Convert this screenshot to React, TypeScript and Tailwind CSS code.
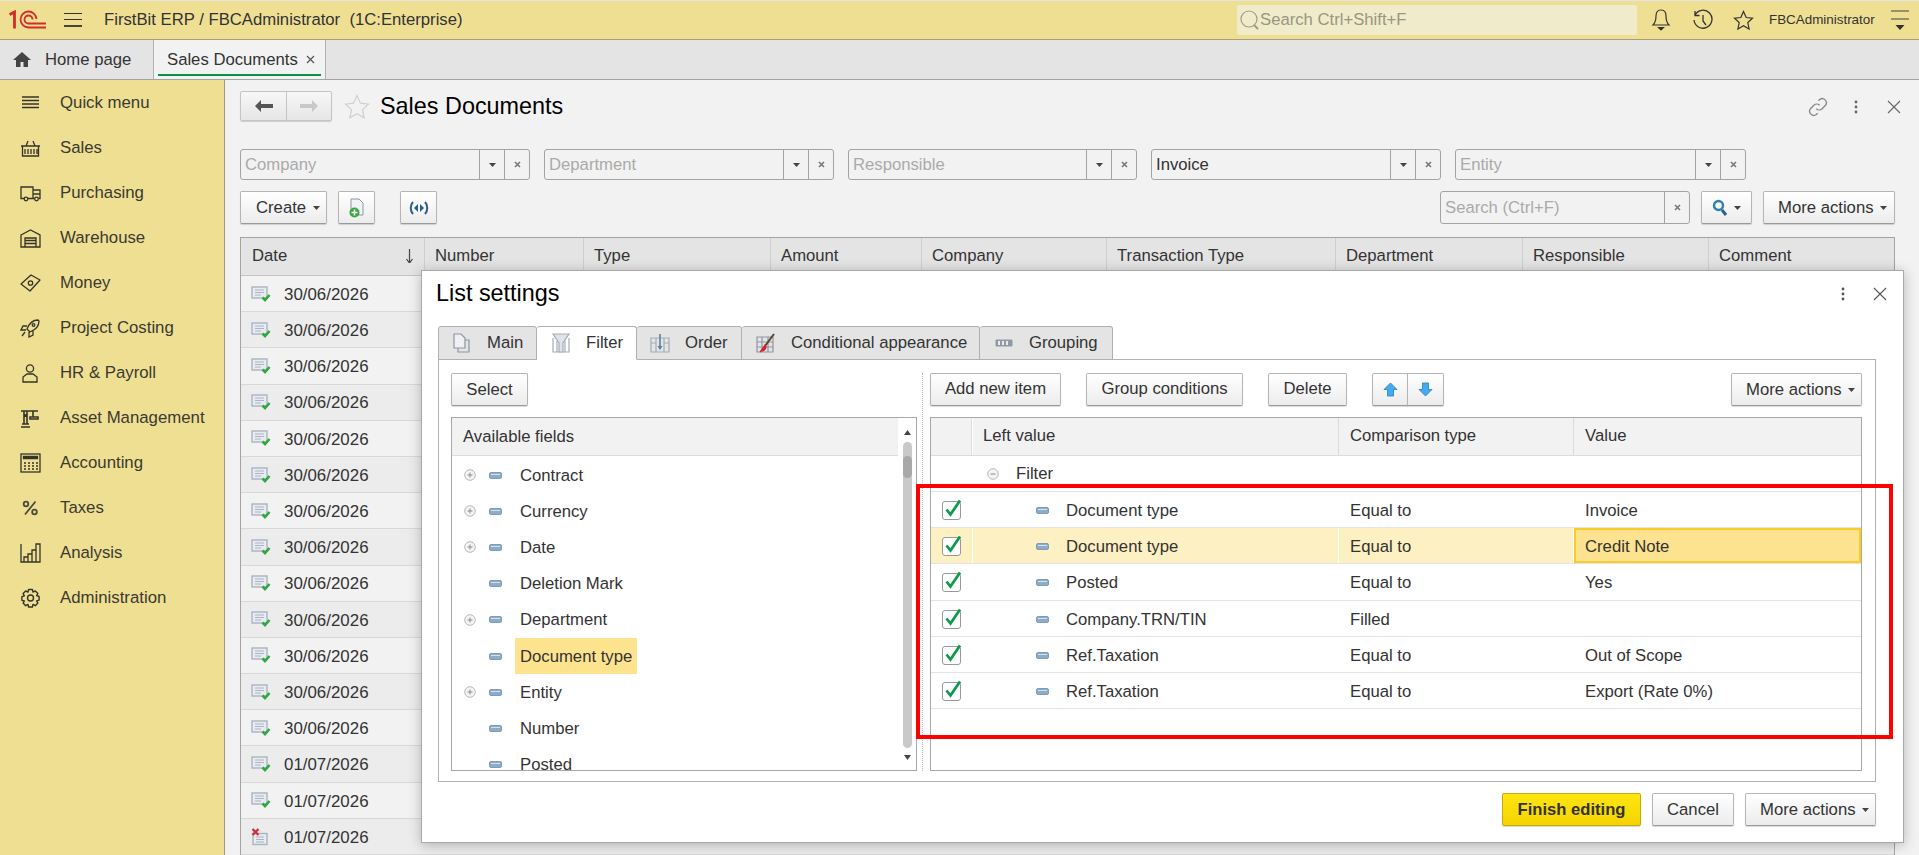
import React from "react";

const FONT = "font-['Liberation_Sans',Arial,sans-serif]";

function Logo() {
  return (
    <svg width="38" height="20" viewBox="0 0 38 20" fill="none" stroke="#d62b2b">
      <path d="M0.500 4.500 L5.500 2 V18.500" strokeWidth="2.800" />
      <path d="M27.500 9 A8 8 0 1 0 19.500 17.500 H37" strokeWidth="1.800" />
      <path d="M23.500 9.500 A4 4 0 1 0 19.500 13.500 H37" strokeWidth="1.800" />
    </svg>
  );
}

function NavIcon({ name }: { name: string }) {
  const c = "#34342a";
  const p = { fill: "none", stroke: c, strokeWidth: 1.3 };
  let body: React.ReactNode = null;
  if (name === "menu") body = <path {...p} d="M2 4h17M2 7.500h17M2 11h17M2 14.500h17" />;
  if (name === "basket")
    body = (
      <g {...p}>
        <path d="M1 8h19M2.500 8v10h16V8M5 11v5M8 11v5M11 11v5M14 11v5M17 11v5M6 8l2-5M15 8l-2-5" />
      </g>
    );
  if (name === "truck")
    body = (
      <g {...p}>
        <path d="M4.500 15.500H1V4h12v11.500H8M13 7h7v8.500h-1.500M13 15.500h1.500M13 11h7" />
        <circle cx="6" cy="16" r="1.800" />
        <circle cx="16.500" cy="16" r="1.800" />
      </g>
    );
  if (name === "warehouse")
    body = (
      <g {...p}>
        <path d="M1 7l9.500-5L20 7v12H1zM5 19v-9h11v9M5 12.500h11M5 15.500h11" />
      </g>
    );
  if (name === "money")
    body = (
      <g {...p}>
        <path d="M1 11l10-9 9 5-10 11z" strokeLinejoin="round" />
        <circle cx="10.500" cy="10" r="2.200" />
      </g>
    );
  if (name === "rocket")
    body = (
      <g {...p}>
        <path d="M18 2c-5 0-9 4-11 9l3 3c5-2 9-6 9-11zM7 8H3l-2 4h5M13 13v4l-4 2v-5M5 14l-3 4" />
        <circle cx="13.500" cy="7" r="1.300" />
      </g>
    );
  if (name === "person")
    body = (
      <g {...p}>
        <circle cx="10" cy="5.500" r="3.600" />
        <path d="M3 19v-5l4-3h6l4 3v5z" />
      </g>
    );
  if (name === "crane")
    body = (
      <g {...p} strokeWidth="1.600">
        <path d="M1 19h9M2 16h7M4 16V3M7 16V3M1 3h17M4 6l3 3M7 6L4 9M13 3v6M10 11h8v-2h-8z" />
      </g>
    );
  if (name === "calc")
    body = (
      <g {...p}>
        <rect x="1" y="1" width="19" height="18" />
        <path d="M3.500 3.500h14v2h-14z" fill={c} />
        <path d="M4 10h2M8 10h2M12 10h2M16 10h2M4 13h2M8 13h2M12 13h2M16 13h2M4 16h2M8 16h2M12 16h2M16 16h2" />
      </g>
    );
  if (name === "percent")
    body = (
      <g stroke="#4a4a3c" fill="none" strokeWidth="1.800">
        <path d="M15.500 3.500L5 16.500" />
        <circle cx="6" cy="6" r="2.300" />
        <circle cx="14.500" cy="14" r="2.300" />
      </g>
    );
  if (name === "chart")
    body = (
      <g {...p}>
        <path d="M1 1v18h19V1h-4v18M16 5h-0M12 19V7h4M8 19v-8h4M4 19v-5h4" />
      </g>
    );
  if (name === "gear")
    body = (
      <g {...p} strokeWidth="1.400">
        <circle cx="10.500" cy="10" r="3" />
        <path
          d="M8.600 1.500h3.800l.6 2.600 2.300-1.200 2.600 2.600-1.300 2.200 2.500.8v3.600l-2.500.7 1.300 2.300-2.600 2.600-2.300-1.300-.6 2.600H8.600l-.6-2.600-2.300 1.300-2.600-2.600L4.400 13l-2.500-.7V8.600l2.500-.8-1.300-2.200 2.600-2.600L8 4.100z"
          strokeLinejoin="round"
        />
      </g>
    );
  return (
    <svg width="21" height="20" viewBox="0 0 21 20">
      {body}
    </svg>
  );
}

const navItems = [
  ["menu", "Quick menu"],
  ["basket", "Sales"],
  ["truck", "Purchasing"],
  ["warehouse", "Warehouse"],
  ["money", "Money"],
  ["rocket", "Project Costing"],
  ["person", "HR & Payroll"],
  ["crane", "Asset Management"],
  ["calc", "Accounting"],
  ["percent", "Taxes"],
  ["chart", "Analysis"],
  ["gear", "Administration"],
];

function Caret({ color = "#444" }: { color?: string }) {
  return (
    <svg width="7" height="4" viewBox="0 0 7 4" className="shrink-0">
      <path d="M0 0h7L3.500 4z" fill={color} />
    </svg>
  );
}

function SmallX({ color = "#777" }: { color?: string }) {
  return (
    <svg width="7" height="7" viewBox="0 0 7 7">
      <path d="M1 1l5 5M6 1L1 6" stroke={color} strokeWidth="1.600" fill="none" />
    </svg>
  );
}

function FilterField({ label, filled, w = "w-[290px]" }: { label: string; filled?: boolean; w?: string }) {
  return (
    <div className={`flex h-[31px] ${w} rounded-[3px] border border-[#a3a3a3] bg-[#f2f2f2]`}>
      <div className={`flex-1 pl-[4px] text-[16.7px] leading-[30px] ${filled ? "text-[#333]" : "text-[#aaa]"}`}>{label}</div>
      <div className="flex w-[25px] items-center justify-center border-l border-[#a3a3a3]">
        <Caret />
      </div>
      <div className="flex w-[25px] items-center justify-center border-l border-[#a3a3a3]">
        <SmallX />
      </div>
    </div>
  );
}

function Btn({ children, className = "" }: { children: React.ReactNode; className?: string }) {
  return (
    <div
      className={`flex items-center justify-center whitespace-nowrap rounded-[2px] border border-[#b5b5b5] border-b-[#999] bg-gradient-to-b from-[#ffffff] to-[#ececec] text-[16.7px] text-[#333] shadow-[0_1px_1px_rgba(0,0,0,0.15)] ${className}`}
    >
      {children}
    </div>
  );
}

function MoreActions({ className = "" }: { className?: string }) {
  return (
    <div
      className={`flex h-[33px] items-center justify-start gap-[6px] whitespace-nowrap rounded-[2px] border border-[#b5b5b5] border-b-[#999] bg-gradient-to-b from-[#ffffff] to-[#ececec] pl-[14px] text-[16.7px] text-[#333] shadow-[0_1px_1px_rgba(0,0,0,0.15)] ${className}`}
    >
      More actions
      <Caret />
    </div>
  );
}

function DocIcon({ bad }: { bad?: boolean }) {
  return (
    <svg width="20" height="18" viewBox="0 0 20 18">
      {bad ? (
        <g>
          <rect x="2" y="5.500" width="14" height="11" fill="#e8ebf0" stroke="#aab4c2" strokeWidth="1.400" />
          <path d="M5 9h8M5 11.500h8M5 14h8" stroke="#aab4c2" />
          <path d="M1.500 1l6 6M7.500 1l-6 6" stroke="#d2323c" strokeWidth="2.400" />
        </g>
      ) : (
        <g>
          <rect x="1" y="1" width="15" height="11" fill="#e8ebf0" stroke="#aab4c2" strokeWidth="1.400" />
          <path d="M4 4h9M4 6.500h9M4 9h6" stroke="#aab4c2" />
          <path d="M11.500 11.500l2.500 2.500 4.500-5" fill="none" stroke="#2fa83f" strokeWidth="2.600" />
        </g>
      )}
    </svg>
  );
}

function Checkbox() {
  return (
    <div className="relative h-[19px] w-[19px] rounded-[3px] border border-[#999] bg-white">
      <svg className="absolute left-[-1px] top-[-3px]" width="21" height="20" viewBox="0 0 21 20">
        <path d="M4.500 10.500L8.500 15.500L18 1.500" fill="none" stroke="#0e9a4c" strokeWidth="2.800" />
      </svg>
    </div>
  );
}

function FieldDash() {
  return (
    <svg width="13" height="7" viewBox="0 0 13 7">
      <rect x="0.500" y="0.500" width="12" height="6" rx="1.500" fill="#8dacc8" stroke="#7f9cb8" />
      <path d="M2 2.500h9" stroke="#d3e1ee" />
    </svg>
  );
}

function Expander({ minus }: { minus?: boolean }) {
  return (
    <svg width="12" height="12" viewBox="0 0 12 12">
      <circle cx="6" cy="6" r="5.300" fill="#f4f4f4" stroke="#b7b7b7" />
      <path d={minus ? "M3.500 6h5" : "M3.500 6h5M6 3.500v5"} stroke="#8a8a8a" />
    </svg>
  );
}

const columns: [string, string][] = [
  ["Number", "w-[159px]"],
  ["Type", "w-[187px]"],
  ["Amount", "w-[151px]"],
  ["Company", "w-[185px]"],
  ["Transaction Type", "w-[229px]"],
  ["Department", "w-[187px]"],
  ["Responsible", "w-[186px]"],
  ["Comment", "flex-1"],
];

const dates = [...Array(13).fill("30/06/2026"), "01/07/2026", "01/07/2026", "01/07/2026"];

const fields: [string, boolean, boolean?][] = [
  ["Contract", true],
  ["Currency", true],
  ["Date", true],
  ["Deletion Mark", false],
  ["Department", true],
  ["Document type", false, true],
  ["Entity", true],
  ["Number", false],
  ["Posted", false],
];

const conditions = [
  ["Document type", "Equal to", "Invoice"],
  ["Document type", "Equal to", "Credit Note"],
  ["Posted", "Equal to", "Yes"],
  ["Company.TRN/TIN", "Filled", ""],
  ["Ref.Taxation", "Equal to", "Out of Scope"],
  ["Ref.Taxation", "Equal to", "Export (Rate 0%)"],
];

function TabIcon({ name }: { name: string }) {
  if (name === "Main")
    return (
      <svg width="18" height="20" viewBox="0 0 18 20" fill="none" stroke="#8d96a3" strokeWidth="1.200">
        <path d="M1 1h7l4 4v10H1z" fill="#eef0f3" />
        <path d="M12 7h4v12H5v-4" />
      </svg>
    );
  if (name === "Filter")
    return (
      <svg width="20" height="20" viewBox="0 0 20 20" fill="none" stroke="#a5adb8" strokeWidth="1.200">
        <path d="M2 5v14h16V5M6 8v11M14 8v11" />
        <path d="M2 1h16l-6 9v9H8v-9z" fill="#dfe2e7" />
      </svg>
    );
  if (name === "Order")
    return (
      <svg width="20" height="20" viewBox="0 0 20 20" fill="none" stroke="#a5adb8" strokeWidth="1.200">
        <path d="M1 5h18v14H1zM6 5v14M14 5v14M1 10h5M14 10h5" />
        <path d="M10 1v15" stroke="#5b7fa6" strokeWidth="1.600" />
        <path d="M7.500 13l2.500 4 2.500-4z" fill="#5b7fa6" stroke="none" />
      </svg>
    );
  if (name === "Conditional appearance")
    return (
      <svg width="20" height="20" viewBox="0 0 20 20" fill="none" stroke="#8d96a3" strokeWidth="1.200">
        <path d="M1 4h16v15H1zM1 9h16M1 14h16M6 4v15M12 4v15" />
        <path d="M18 1L9 13" stroke="#5a4632" strokeWidth="2" />
        <path d="M9 12l-5 7 1-1c3 0 5-2 5-4z" fill="#d6232c" stroke="#d6232c" />
      </svg>
    );
  return (
    <svg width="18" height="8" viewBox="0 0 18 8">
      <rect x="0.500" y="0.500" width="17" height="7" rx="1" fill="#8f98a5" />
      <path d="M3 2h2v4H3zM7 2h2v4H7zM11 2h2v4h-2z" fill="#e9ebee" />
    </svg>
  );
}

const tabs: [string, string, string][] = [
  ["Main", "w-[99px] pl-[14px]", "gap-[16px]"],
  ["Filter", "w-[100px] pl-[14px]", "gap-[15px]"],
  ["Order", "w-[105px] pl-[13px]", "gap-[15px]"],
  ["Conditional appearance", "w-[238px] pl-[14px]", "gap-[15px]"],
  ["Grouping", "w-[133px] pl-[15px]", "gap-[16px]"],
];

function Caret2({ up }: { up?: boolean }) {
  return (
    <svg width="7" height="5" viewBox="0 0 7 5" className="shrink-0">
      <path d={up ? "M3.500 0L7 5H0z" : "M0 0h7L3.500 5z"} fill="#444" />
    </svg>
  );
}

function Arrow({ up }: { up?: boolean }) {
  return (
    <svg width="15" height="15" viewBox="0 0 15 15">
      <path
        d={up ? "M7.500 1L14 7.500H10.500V14H4.500V7.500H1z" : "M7.500 14L14 7.500H10.500V1H4.500V7.500H1z"}
        fill="#46aaf0"
        stroke="#3a85bd"
        strokeWidth="0.900"
      />
    </svg>
  );
}

function ListSettings() {
  return (
    <div className="absolute left-[421px] top-[270px] flex h-[573px] w-[1483px] flex-col border border-[#a8a8a8] bg-white pl-[16px] pr-[27px] shadow-[0_2px_12px_rgba(0,0,0,0.25)]">
      <div className="flex h-[55px] items-center justify-between">
        <div className="ml-[-2px] pb-[9px] text-[23.4px] text-black">List settings</div>
        <div className="mr-[-11px] flex items-center gap-[28px] pb-[9px]">
          <svg width="4" height="14" viewBox="0 0 4 14">
            <g fill="#555">
              <circle cx="2" cy="2" r="1.400" />
              <circle cx="2" cy="7" r="1.400" />
              <circle cx="2" cy="12" r="1.400" />
            </g>
          </svg>
          <svg width="14" height="14" viewBox="0 0 14 14">
            <path d="M1 1l12 12M13 1L1 13" stroke="#555" strokeWidth="1.100" fill="none" />
          </svg>
        </div>
      </div>
      <div className="flex h-[34px]">
        {tabs.map(([t, w, g]) => (
          <div
            key={t}
            className={`flex items-center ${g} ${w} whitespace-nowrap rounded-t-[3px] border border-l-0 first:border-l border-[#b0b0b0] text-[16.7px] text-[#333] ${
              t === "Filter" ? "z-10 border-b-white bg-white" : "bg-[#e4e4e4]"
            }`}
          >
            <TabIcon name={t} />
            {t}
          </div>
        ))}
      </div>
      <div className="mt-[-1px] flex h-[423px] flex-col border border-[#b0b0b0] pl-[12px] pr-[13px] pt-[13px]">
        <div className="flex h-[398px]">
          <div className="flex w-[466px] flex-col">
            <Btn className="h-[33px] w-[77px]">Select</Btn>
            <div className="mt-[11px] flex min-h-0 flex-1 border border-[#a8a8a8]">
              <div className="flex min-w-0 flex-1 flex-col overflow-hidden">
                <div className="h-[38px] shrink-0 border-b border-[#dcdcdc] bg-[#f2f2f2] pl-[11px] text-[16.7px] leading-[37px] text-[#333]">
                  Available fields
                </div>
                {fields.map(([f, exp, sel]) => (
                  <div key={f} className="flex h-[36.2px] shrink-0 items-center pl-[12px] pt-[2px] text-[16.7px] text-[#333]">
                    <div className="flex w-[25px] items-center">{exp && <Expander />}</div>
                    <div className="flex w-[26px] items-center">
                      <FieldDash />
                    </div>
                    <div className={`flex h-[36px] items-center px-[5px] ${sel ? "bg-[#fee38f]" : ""}`}>{f}</div>
                  </div>
                ))}
              </div>
              <div className="flex w-[18px] flex-col items-center pb-[10px] pt-[12px]">
                <Caret2 up />
                <div className="my-[7px] w-[9px] flex-1 rounded-[5px] bg-[#c9c9c9] pt-[14px]">
                  <div className="h-[22px] rounded-[5px] bg-[#a9a9a9]" />
                </div>
                <Caret2 />
              </div>
            </div>
          </div>
          <div className="ml-[5px] mr-[7px] h-full border-l border-dotted border-[#bbb]" />
          <div className="flex min-w-0 flex-1 flex-col">
            <div className="flex items-center">
              <Btn className="h-[33px] w-[131px] pb-[1px]">Add new item</Btn>
              <Btn className="ml-[25px] h-[33px] w-[157px] pb-[1px]">Group conditions</Btn>
              <Btn className="ml-[25px] h-[33px] w-[79px] pb-[1px]">Delete</Btn>
              <div className="ml-[25px] flex">
                <Btn className="h-[33px] w-[36px] rounded-r-none">
                  <Arrow up />
                </Btn>
                <Btn className="ml-[-1px] h-[33px] w-[37px] rounded-l-none">
                  <Arrow />
                </Btn>
              </div>
              <MoreActions className="ml-auto w-[131px]" />
            </div>
            <div className="mt-[11px] flex min-h-0 flex-1 flex-col border border-[#a8a8a8]">
              <div className="flex h-[38px] shrink-0 border-b border-[#dcdcdc] text-[16.7px] leading-[36px] text-[#333]">
                <div className="w-[41px] border-r border-[#dcdcdc] bg-[#f2f2f2]" />
                <div className="ml-[1px] w-[366px] border-r border-[#dcdcdc] bg-[#f2f2f2] pl-[10px]">Left value</div>
                <div className="w-[235px] border-r border-[#dcdcdc] bg-[#f2f2f2] pl-[11px]">Comparison type</div>
                <div className="flex-1 bg-[#f2f2f2] pl-[11px]">Value</div>
              </div>
              <div className="flex h-[36px] items-center border-b border-[#e4e4e4] text-[16.7px] text-[#333]">
                <div className="ml-[56px] flex w-[29px] items-center">
                  <Expander minus />
                </div>
                Filter
              </div>
              {conditions.map(([l, c, v], i) => (
                <div
                  key={i}
                  className={`flex h-[36.2px] shrink-0 items-center border-b border-[#e4e4e4] text-[16.7px] text-[#333] ${
                    i === 1 ? "bg-[#fdf0c2]" : ""
                  }`}
                >
                  <div className="flex h-full w-[42px] items-center justify-center border-r border-white pt-[2px]">
                    <Checkbox />
                  </div>
                  <div className="flex h-full w-[366px] items-center border-r border-white pl-[63px] pt-[2px]">
                    <FieldDash />
                    <span className="ml-[17px]">{l}</span>
                  </div>
                  <div className="flex h-full w-[235px] items-center border-r border-white pl-[11px] pt-[2px]">{c}</div>
                  <div
                    className={`flex h-full flex-1 items-center pt-[2px] ${
                      i === 1 ? "border-2 border-[#fdcb25] bg-[#fde28f] pl-[9px]" : "pl-[11px]"
                    }`}
                  >
                    {v}
                  </div>
                </div>
              ))}
            </div>
          </div>
        </div>
      </div>
      <div className="flex flex-1 items-start justify-end gap-[11px] pt-[11px]">
        <div className="flex h-[33px] w-[139px] items-center justify-center rounded-[2px] border border-[#c7a900] bg-gradient-to-b from-[#ffe610] to-[#f5d400] pt-[1px] text-[16.6px] font-bold text-[#333] shadow-[0_1px_1px_rgba(0,0,0,0.15)]">
          Finish editing
        </div>
        <Btn className="h-[33px] w-[82px] pt-[1px]">Cancel</Btn>
        <MoreActions className="w-[131px] pt-[1px]" />
      </div>
      <div className="pointer-events-none absolute left-[494px] top-[213px] h-[255px] w-[977px] border-[4px] border-[#ff0000]" />
    </div>
  );
}

export default function App() {
  return (
    <div className={`relative flex h-[855px] w-[1919px] flex-col overflow-hidden bg-[#f2f2f2] ${FONT}`}>
      <header className="flex h-[40px] shrink-0 items-center border-b border-t border-b-[#a89f7a] border-t-[#e4e4e4] bg-[#efdf93] text-[#333]">
        <div className="ml-[9px]">
          <Logo />
        </div>
        <svg className="ml-[17px]" width="18" height="14" viewBox="0 0 18 14">
          <path d="M0 0.500h18M0 6.500h18" stroke="#333" strokeWidth="1" />
          <path d="M0 13h18" stroke="#333" strokeWidth="1.800" />
        </svg>
        <div className="ml-[22px] whitespace-pre text-[16.7px]">FirstBit ERP / FBCAdministrator  (1C:Enterprise)</div>
        <div className="ml-auto flex h-[30px] w-[400px] items-center rounded-[2px] bg-[#f0ebca] pl-[3px] text-[16.7px] text-[#999682]">
          <svg width="20" height="22" viewBox="0 0 20 22" fill="none" stroke="#a09c88" strokeWidth="1.200">
            <circle cx="9" cy="10" r="8" />
            <path d="M14 16l4 4" strokeWidth="2" />
          </svg>
          Search Ctrl+Shift+F
        </div>
        <div className="ml-[14px] flex w-[103px] items-center justify-between">
          <svg width="20" height="24" viewBox="0 0 20 24" fill="none" stroke="#333" strokeWidth="1.200">
            <path d="M10 2c-4 0-5 3-5 6 0 4-1 7-3 9h16c-2-2-3-5-3-9 0-3-1-6-5-6z" />
            <path d="M7.500 19.500h5l-2.500 2.500z" fill="#333" />
          </svg>
          <svg width="21" height="22" viewBox="0 0 21 22" fill="none" stroke="#333" strokeWidth="1.300">
            <path d="M3 6a9 9 0 1 1-1 5M3 2v4.500h4.500M11 6v6l3 4" />
          </svg>
          <svg width="21" height="21" viewBox="0 0 21 21" fill="none" stroke="#333" strokeWidth="1.200">
            <path d="M10.500 1.500l2.700 6 6.300.7-4.700 4.300 1.300 6.500-5.600-3.300-5.600 3.300 1.300-6.500L1.500 8.200l6.300-.7z" />
          </svg>
        </div>
        <div className="ml-[15px] w-[105px] whitespace-nowrap text-[13.4px]">FBCAdministrator</div>
        <svg className="ml-[17px] mr-[10px]" width="18" height="22" viewBox="0 0 18 22">
          <path d="M0 2h18M0 10h18" stroke="#444" strokeWidth="1.200" />
          <path d="M4.500 16h9l-4.500 5z" fill="#333" />
        </svg>
      </header>

      <nav className="flex h-[40px] shrink-0 border-b border-[#a3a3a3] bg-[#e4e4e4] text-[16.7px] text-[#333]">
        <div className="flex w-[154px] items-center border-r border-[#b0b0b0] pl-[13px]">
          <svg width="18" height="15" viewBox="0 0 18 15">
            <path d="M9 0L0 8h3v7h4.500v-5h3v5H15V8h3z" fill="#444" />
          </svg>
          <span className="ml-[14px]">Home page</span>
        </div>
        <div className="relative flex w-[172px] items-center border-r border-[#b0b0b0] bg-[#f2f2f2] pl-[13px]">
          Sales Documents
          <svg className="ml-[8px]" width="9" height="9" viewBox="0 0 9 9">
            <path d="M1 1l7 7M8 1L1 8" stroke="#555" strokeWidth="1.200" />
          </svg>
          <div className="absolute bottom-[3px] left-[4px] right-[4px] h-[2px] bg-[#0b8f4d]" />
        </div>
      </nav>

      <div className="flex min-h-0 flex-1">
        <aside className="w-[225px] shrink-0 border-r border-[#9a9a8a] bg-[#efdf93]">
          {navItems.map(([icon, label]) => (
            <div key={label} className="flex h-[45px] items-center pl-[20px] text-[16.8px] text-[#3a3a30]">
              <div className="flex w-[40px] items-center">
                <NavIcon name={icon} />
              </div>
              {label}
            </div>
          ))}
        </aside>

        <main className="min-w-0 flex-1 pl-[15px] pr-[24px]">
          <div className="flex h-[52px] items-center">
            <div className="flex h-[30px] w-[92px] rounded-[2px] border border-[#c4c4c4] bg-gradient-to-b from-[#f7f7f7] to-[#e6e6e6] shadow-[0_1px_1px_rgba(0,0,0,0.15)]">
              <div className="flex w-[46px] items-center justify-center border-r border-[#c4c4c4]">
                <svg width="18" height="12" viewBox="0 0 18 12">
                  <path d="M6 0v4h12v4H6v4L0 6z" fill="#555" />
                </svg>
              </div>
              <div className="flex flex-1 items-center justify-center">
                <svg width="18" height="12" viewBox="0 0 18 12">
                  <path d="M12 0v4H0v4h12v4l6-6z" fill="#c8c8c8" />
                </svg>
              </div>
            </div>
            <svg className="ml-[12px]" width="26" height="25" viewBox="0 0 26 25" fill="none" stroke="#d0d0d0" strokeWidth="1.200">
              <path d="M13 1.500l3.400 7.700 8.100.9-6 5.500 1.700 8.200-7.200-4.100-7.200 4.100 1.700-8.200-6-5.500 8.100-.9z" />
            </svg>
            <h1 className="ml-[10px] mt-[2px] text-[23.4px] text-black">Sales Documents</h1>
            <div className="ml-auto mr-[-6px] mt-[2px] flex items-center">
              <svg width="20" height="20" viewBox="0 0 24 24" fill="none" stroke="#888" strokeWidth="1.600">
                <path d="M10 14a5 5 0 0 0 7 0l4-4a5 5 0 0 0-7-7l-1.500 1.500M14 10a5 5 0 0 0-7 0l-4 4a5 5 0 0 0 7 7l1.500-1.500" />
              </svg>
              <svg className="ml-[26px]" width="4" height="14" viewBox="0 0 4 14">
                <g fill="#666">
                  <circle cx="2" cy="2" r="1.400" />
                  <circle cx="2" cy="7" r="1.400" />
                  <circle cx="2" cy="12" r="1.400" />
                </g>
              </svg>
              <svg className="ml-[29px]" width="14" height="14" viewBox="0 0 14 14">
                <path d="M1 1l12 12M13 1L1 13" stroke="#666" strokeWidth="1.100" fill="none" />
              </svg>
            </div>
          </div>

          <div className="mt-[17px] flex gap-[14px]">
            <FilterField label="Company" />
            <FilterField label="Department" />
            <FilterField label="Responsible" w="w-[289px]" />
            <FilterField label="Invoice" filled />
            <FilterField label="Entity" w="w-[291px]" />
          </div>

          <div className="mt-[11px] flex h-[33px] items-center">
            <Btn className="h-[33px] w-[87px] justify-start gap-[7px] pl-[15px]">
              Create
              <Caret />
            </Btn>
            <Btn className="ml-[11px] h-[33px] w-[37px]">
              <svg width="18" height="20" viewBox="0 0 18 20">
                <path d="M3 1h8l4 4v12H3z" fill="#f1f3f5" stroke="#8d96a3" />
                <circle cx="6.500" cy="14.500" r="5" fill="#33a83c" />
                <path d="M3.500 14.500h6M6.500 11.500v6" stroke="#fff" strokeWidth="1.600" />
              </svg>
            </Btn>
            <Btn className="ml-[25px] h-[33px] w-[37px]">
              <svg width="22" height="14" viewBox="0 0 22 14" fill="none" stroke="#2d5c8a" strokeWidth="2">
                <path d="M5 1C2 4 2 10 5 13M17 1c3 3 3 9 0 12" />
                <path d="M10 3L6 7l4 4zM12 3l4 4-4 4z" fill="#2d5c8a" stroke="none" />
              </svg>
            </Btn>
            <div className="ml-auto flex h-[33px] w-[250px] rounded-[3px] border border-[#a3a3a3] bg-[#f2f2f2]">
              <div className="flex-1 pl-[4px] text-[16.7px] leading-[31px] text-[#aaa]">Search (Ctrl+F)</div>
              <div className="flex w-[25px] items-center justify-center border-l border-[#a3a3a3]">
                <SmallX />
              </div>
            </div>
            <Btn className="ml-[11px] h-[33px] w-[51px] gap-[6px]">
              <svg width="16" height="18" viewBox="0 0 16 18" fill="none">
                <circle cx="6.500" cy="6.500" r="4.500" stroke="#2f7fb5" strokeWidth="2.400" />
                <path d="M10 11l4 5" stroke="#2a628f" strokeWidth="3" />
              </svg>
              <Caret />
            </Btn>
            <MoreActions className="ml-[11px] w-[132px]" />
          </div>

          <div className="mt-[13px] border-x border-t border-[#a3a3a3]">
            <div className="flex h-[38px] border-b border-[#c4c4c4] bg-[#e4e4e4] pb-[2px] text-[16.7px] text-[#333]">
              <div className="flex w-[184px] items-center justify-between border-r border-[#cfcfcf] pl-[11px] pr-[11px]">
                Date
                <svg width="7" height="14" viewBox="0 0 7 14">
                  <path d="M3.500 0v13M0.500 10l3 4 3-4" stroke="#444" strokeWidth="1.200" fill="none" />
                </svg>
              </div>
              {columns.map(([c, w]) => (
                <div key={c} className={`flex items-center border-r border-[#cfcfcf] pl-[10px] last:border-r-0 ${w}`}>
                  {c}
                </div>
              ))}
            </div>
            {dates.map((d, i) => (
              <div
                key={i}
                className={`flex h-[36.2px] items-center border-b border-[#d8d8d8] pl-[10px] pt-[2px] text-[16.9px] text-[#333] ${
                  i % 2 === 0 ? "bg-[#f2f2f2]" : "bg-[#ececec]"
                }`}
              >
                <DocIcon bad={i === 15} />
                <span className="ml-[13px]">{d}</span>
              </div>
            ))}
          </div>
        </main>
      </div>

      <ListSettings />
    </div>
  );
}
